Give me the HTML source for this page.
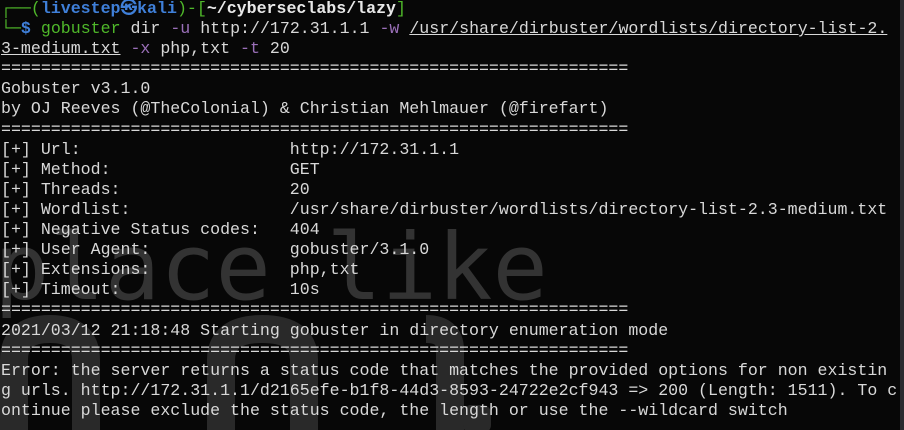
<!DOCTYPE html>
<html><head><meta charset="utf-8"><style>
html,body{margin:0;padding:0;background:#070707;width:904px;height:430px;overflow:hidden;position:relative}
.wm{position:absolute;left:-6px;top:214px;font:92px "DejaVu Sans Mono",monospace;color:#333;white-space:pre;letter-spacing:0}
svg{position:absolute;left:0;top:0}
pre{position:absolute;left:1px;top:-1px;margin:0;font:16.6px/20.1px "Liberation Mono","DejaVu Sans Mono",monospace;color:#d8d8d8;white-space:pre}
.g{color:#4fb82a}.b{color:#3f7fd8;font-weight:bold}.w{color:#e8e8e8;font-weight:bold}.p{color:#9a6fb8}.u{text-decoration:underline}
.sb{position:absolute;right:0;top:0;width:4px;height:430px;background:#2b2b30}
</style></head><body>
<div class="wm">place like</div>
<svg width="904" height="430"><g fill="none" stroke="#292929" stroke-width="28">
<path d="M14 440 V360 Q14 329 50 329 Q86 329 86 360 V440"/>
<path d="M221 440 V360 Q221 329 262 329 Q304 329 304 360 V440"/>
<path d="M426 329 Q450 329 450 350 V440"/></g>
<rect x="463" y="405" width="28" height="28" rx="8" fill="#292929"/>
</svg>
<pre><span class="g">┌──(</span><span class="b">livestep㉿kali</span><span class="g">)-[</span><span class="w">~/cyberseclabs/lazy</span><span class="g">]</span>
<span class="g">└─</span><span class="b">$</span> <span class="g">gobuster</span> dir <span class="p">-u</span> http://172.31.1.1 <span class="p">-w</span> <span class="u">/usr/share/dirbuster/wordlists/directory-list-2.</span>
<span class="u">3-medium.txt</span> <span class="p">-x</span> php,txt <span class="p">-t</span> 20
===============================================================
Gobuster v3.1.0
by OJ Reeves (@TheColonial) &amp; Christian Mehlmauer (@firefart)
===============================================================
[+] Url:                     http://172.31.1.1
[+] Method:                  GET
[+] Threads:                 20
[+] Wordlist:                /usr/share/dirbuster/wordlists/directory-list-2.3-medium.txt
[+] Negative Status codes:   404
[+] User Agent:              gobuster/3.1.0
[+] Extensions:              php,txt
[+] Timeout:                 10s
===============================================================
2021/03/12 21:18:48 Starting gobuster in directory enumeration mode
===============================================================
Error: the server returns a status code that matches the provided options for non existin
g urls. http://172.31.1.1/d2165efe-b1f8-44d3-8593-24722e2cf943 =&gt; 200 (Length: 1511). To c
ontinue please exclude the status code, the length or use the --wildcard switch</pre>
<div class="sb"></div>
</body></html>
